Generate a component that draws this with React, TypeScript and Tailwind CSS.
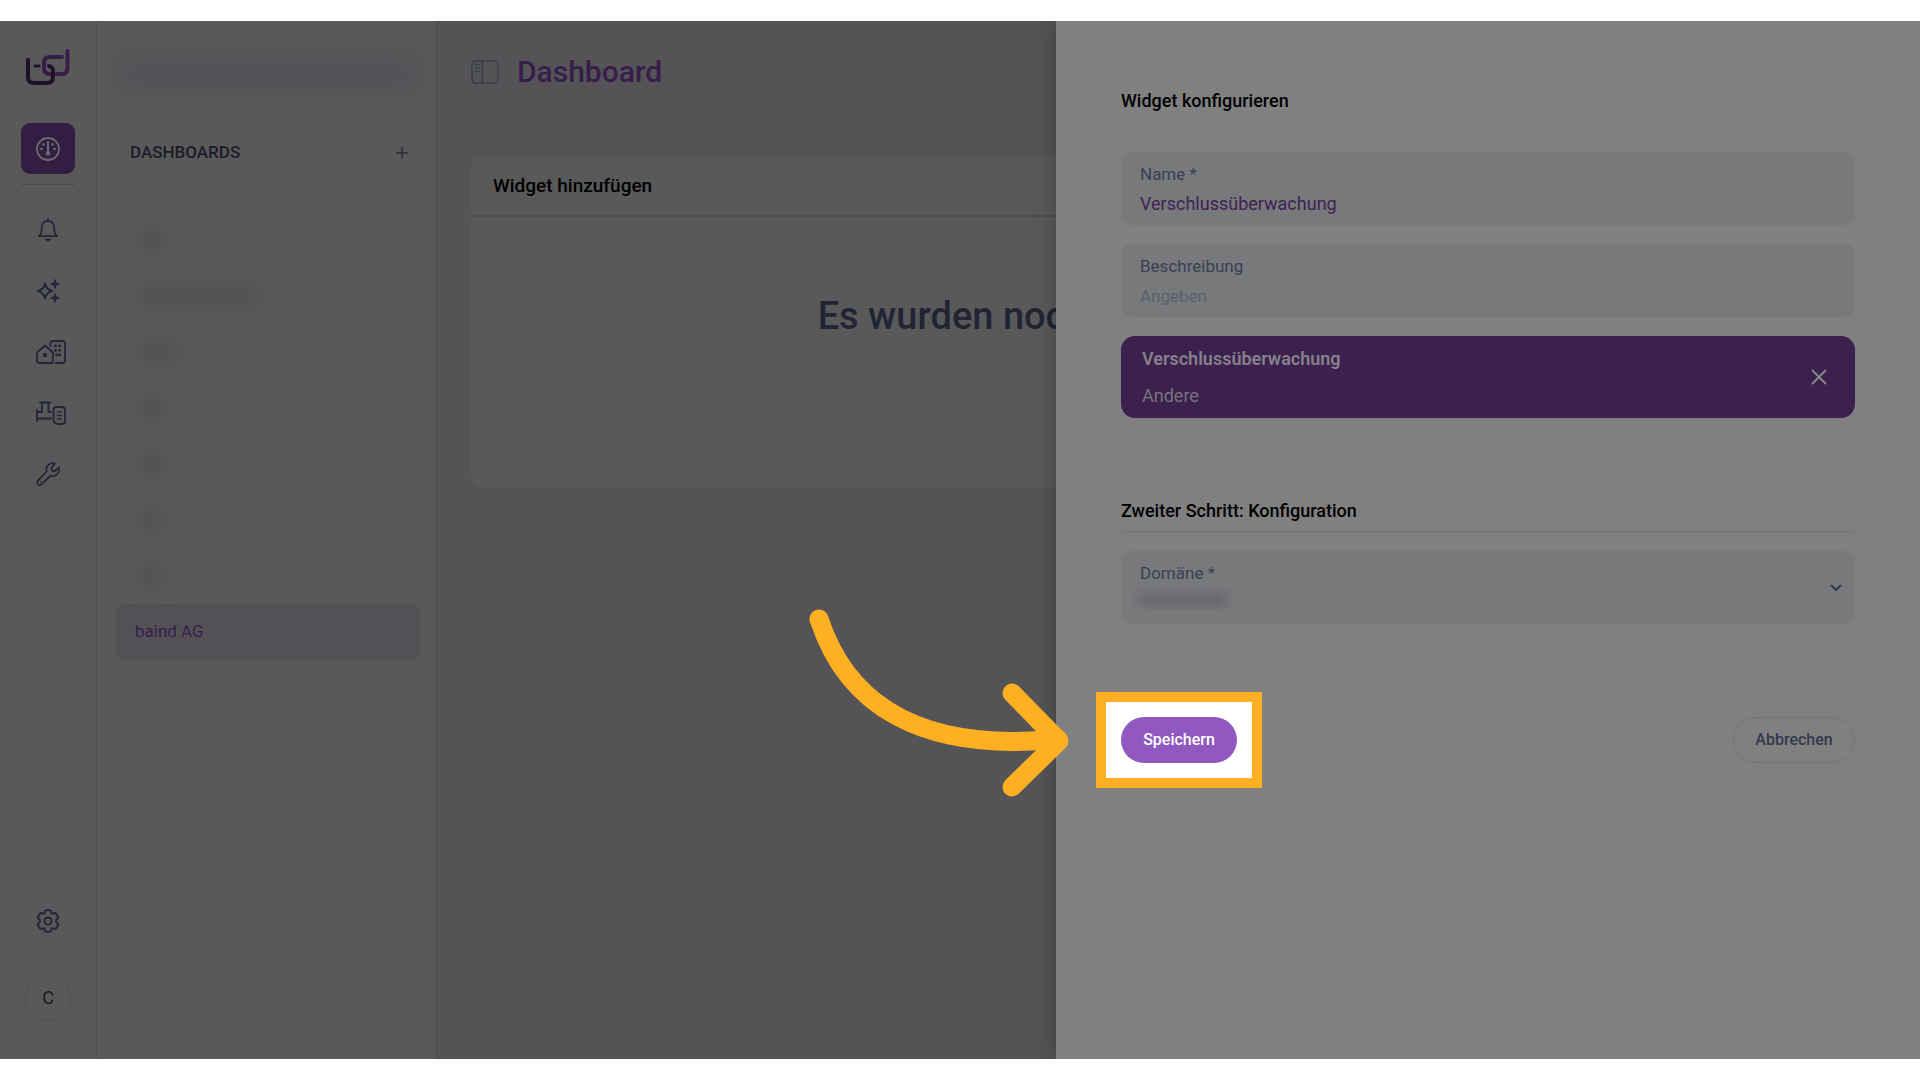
import React from 'react';

const navIcon = 'h-6 w-6 overflow-visible';

const Logo: React.FC = () => (
  <svg viewBox="0 0 44 36" fill="none" strokeWidth="4" strokeLinecap="round" strokeLinejoin="round" className="h-9 w-11">
    <path d="M36 8H24c-4 0-6 2-6 6v5c0 4 2 6 6 6" stroke="#371e48" />
    <path d="M41.500 2v17c0 4-2 6-6 6H31" stroke="#371e48" />
    <path d="M2 11v17c0 4 2 6 6 6h13c4 0 6-2 6-6v-5c0-4-1-5-4-6" stroke="#1e1227" />
    <path d="M9 17h4" stroke="#1e1227" strokeWidth="3" />
  </svg>
);

const GaugeIcon: React.FC = () => (
  <svg viewBox="0 0 24 24" fill="none" stroke="currentColor" className={navIcon}>
    <circle cx="12" cy="12" r="11" strokeWidth="1.800" />
    <path d="M12 5v12" strokeWidth="2" strokeLinecap="round" />
    <circle cx="12" cy="16.500" r="2.200" fill="currentColor" stroke="none" />
    <g fill="currentColor" stroke="none">
      <circle cx="5.500" cy="12" r="1.300" />
      <circle cx="7.500" cy="7.500" r="1.300" />
      <circle cx="16.500" cy="7.500" r="1.300" />
      <circle cx="18.500" cy="12" r="1.300" />
    </g>
  </svg>
);

const BellIcon: React.FC = () => (
  <svg viewBox="0 0 24 24" fill="none" stroke="currentColor" strokeWidth="1.8" strokeLinecap="round" strokeLinejoin="round" className={navIcon}>
    <path d="M12 1v1.500M3 18.200h18c-2-2-2.700-4-2.700-6.500V9.500C18.300 5.500 15.500 3 12 3S5.700 5.500 5.700 9.500v2.200c0 2.500-.7 4.500-2.700 6.500Z" />
    <path d="M9 20.800h6c-.4 1.600-1.500 2.600-3 2.600s-2.600-1-3-2.600Z" fill="currentColor" stroke="none" />
  </svg>
);

const SparklesIcon: React.FC = () => (
  <svg viewBox="0 0 24 24" fill="none" stroke="currentColor" strokeLinejoin="round" className={navIcon}>
    <path d="M9 4.500c.8 4.600 2.600 6.400 7.200 7.500-4.600 1.100-6.400 2.900-7.200 7.500C8.200 14.900 6.400 13.100 1.800 12 6.400 10.900 8.200 9.100 9 4.500Z" strokeWidth="2" />
    <path d="M19 .5c.6 2.900 1.500 3.800 4.500 4.500-3 .7-3.900 1.600-4.500 4.500-.6-2.900-1.500-3.800-4.500-4.500 3-.7 3.900-1.600 4.500-4.500ZM19 14.500c.6 2.900 1.500 3.800 4.500 4.500-3 .7-3.900 1.600-4.500 4.500-.6-2.900-1.500-3.800-4.500-4.500 3-.7 3.900-1.600 4.500-4.500Z" fill="currentColor" />
  </svg>
);

const BuildingsIcon: React.FC = () => (
  <svg viewBox="0 0 30 24" fill="none" stroke="currentColor" strokeWidth="1.8" strokeLinecap="round" strokeLinejoin="round" className="h-6 w-[30px]">
    <path d="M1 12.500 9 5.500l8 7V21c0 1.300-.7 2-2 2H3c-1.300 0-2-.7-2-2Z" />
    <path d="M14.500 6V3c0-1.300.7-2 2-2H27c1.300 0 2 .7 2 2v18c0 1.300-.7 2-2 2h-7.500" />
    <rect x="7" y="13" width="4" height="4" fill="currentColor" stroke="none" rx="1" />
    <path d="M19.500 6h.1M23.500 6h.1M19.500 10.500h.1M23.500 10.500h.1M20.500 15h.1M23.500 15h.1" strokeWidth="2.800" />
  </svg>
);

const DevicesIcon: React.FC = () => (
  <svg viewBox="0 0 30 24" fill="none" stroke="currentColor" strokeWidth="1.8" strokeLinecap="round" strokeLinejoin="round" className="h-6 w-[30px]">
    <path d="M4 1.500h10.500M6 1.500V11H1M12.500 1.500V11H15M1 9v11M1 17.500h14" />
    <path d="M20.500 6H26c2 0 3 1 3 3v11c0 2-1 3-3 3h-3.500c-3.500-.5-5-2-5-4.500V9c0-2 1-3 3-3Z" />
    <path d="M21.500 11h4M21.500 14.500h4M21.500 18h4" strokeWidth="1.400" />
  </svg>
);

const WrenchIcon: React.FC = () => (
  <svg viewBox="0 0 24 24" fill="none" stroke="currentColor" strokeWidth="1.8" strokeLinecap="round" strokeLinejoin="round" className={navIcon}>
    <path d="M18.800 1.300c-3.300-.8-6.600.7-7.900 3.600-.7 1.600-.6 3.200-.3 4.600L1.900 18.600a2.600 2.600 0 0 0 3.700 3.700l8.800-8.400c1.500.3 3.100.3 4.700-.4 3.200-1.400 4.600-5 3.700-8.200l-3.200 3.200c-1.200 1.200-3.200.8-3.900-.6-.5-1-.2-2.200.5-3Z" />
    <path d="M4.500 19.800h.1" />
  </svg>
);

const GearIcon: React.FC = () => (
  <svg viewBox="0 0 24 24" fill="none" stroke="currentColor" strokeWidth="2" strokeLinejoin="round" className={navIcon}>
    <path d="M10 1.200h4c.6 0 1 .4 1.100 1l.3 1.700c.1.500.9 1 1.400.8l1.700-.6c.6-.2 1.200 0 1.500.5l2 3.500c.3.500.2 1.100-.3 1.500l-1.300 1.100c-.4.400-.4 2.200 0 2.600l1.300 1.100c.5.400.6 1 .3 1.500l-2 3.500c-.3.500-.9.700-1.500.5l-1.700-.6c-.5-.2-1.300.3-1.400.8l-.3 1.700c-.1.600-.5 1-1.100 1h-4c-.6 0-1-.4-1.100-1l-.3-1.700c-.1-.5-.9-1-1.400-.8l-1.700.6c-.6.2-1.200 0-1.500-.5l-2-3.500c-.3-.5-.2-1.100.3-1.500l1.300-1.100c.4-.4.4-2.200 0-2.600L2.300 9.600c-.5-.4-.6-1-.3-1.500l2-3.500c.3-.5.900-.7 1.500-.5l1.700.6c.5.2 1.300-.3 1.400-.8l.3-1.700c.1-.6.5-1 1.100-1Z" />
    <circle cx="12" cy="12" r="3.500" />
  </svg>
);

const SidebarToggleIcon: React.FC = () => (
  <svg viewBox="0 0 28 24" fill="none" stroke="currentColor" strokeWidth="1.5" strokeLinecap="round" className="h-6 w-7">
    <rect x="1" y="1" width="26" height="22" rx="3" />
    <path d="M11.500 1v22M4.500 4.500h3.500M4.500 8h3.500M4.500 11.500h3.500" />
  </svg>
);

const navItems = [
  { label: 'Benachrichtigungen', icon: <BellIcon /> },
  { label: 'Assistent', icon: <SparklesIcon /> },
  { label: 'Gebäude', icon: <BuildingsIcon /> },
  { label: 'Geräte', icon: <DevicesIcon /> },
  { label: 'Werkzeuge', icon: <WrenchIcon /> },
];

// widths of the redacted dashboard names
const redactedItems = ['w-8', 'w-[124px]', 'w-11', 'w-8', 'w-8', 'w-7', 'w-7'];

const NavRail: React.FC = () => (
  <nav className="w-[97px] shrink-0 border-r border-[#4d4d57] flex flex-col items-center pt-7 pb-[38px] text-[#23263a]">
    <a href="#" aria-label="Startseite">
      <Logo />
    </a>
    <div className="mt-[38px] pb-2.5 border-b border-[#4c4c4c]">
      <button aria-label="Dashboards" className="block w-[54px] h-[51px] rounded-[9px] bg-[#331d43] text-[#6c6a6e]">
        <span className="flex justify-center">
          <GaugeIcon />
        </span>
      </button>
    </div>
    <div className="mt-8 w-6 flex flex-col gap-9">
      {navItems.map((item) => (
        <button key={item.label} aria-label={item.label} className="h-[25px] w-6 flex items-center">
          <span className="shrink-0">{item.icon}</span>
        </button>
      ))}
    </div>
    <button aria-label="Einstellungen" className="mt-auto">
      <GearIcon />
    </button>
    <button className="mt-[42px] w-[46px] h-[46px] rounded-full border border-[#505051] text-lg text-[#1a1b26]">C</button>
  </nav>
);

const Sidebar: React.FC = () => (
  <aside className="w-[340px] shrink-0 border-r border-[#4b4b54] pl-[19px] pr-4 pt-8">
    <div className="h-11 rounded-lg bg-[#525457] blur-[10px]" />
    <div className="mt-7 h-14 pl-3.5 pr-3 flex items-center justify-between">
      <h2 className="text-[17px] font-medium text-[#1b1c29]">DASHBOARDS</h2>
      <button aria-label="Dashboard hinzufügen" className="text-[#282a3a]">
        <svg viewBox="0 0 12 12" fill="none" stroke="currentColor" strokeWidth="1.3" className="h-3 w-3">
          <path d="M6 0v12M0 6h12" />
        </svg>
      </button>
    </div>
    <ul className="mt-[31px]">
      {redactedItems.map((width, index) => (
        <li key={index} className="h-14 px-[19px] flex items-center">
          <div className={`${width} h-4 rounded bg-[#505154] blur-[8px]`} />
        </li>
      ))}
      <li>
        <a href="#" className="h-14 px-[19px] rounded-[9px] bg-[#545156] flex items-center text-[17px] text-[#371d4b]">
          baind AG
        </a>
      </li>
    </ul>
  </aside>
);

const Dashboard: React.FC = () => (
  <main className="flex-1 min-w-0 bg-[#545456] px-[34px]">
    <div className="h-[102px] flex items-center gap-[18px] text-[#393e47]">
      <button aria-label="Seitenleiste umschalten">
        <SidebarToggleIcon />
      </button>
      <h1 className="text-3xl font-medium text-[#371d4b]">Dashboard</h1>
    </div>
    <section className="mt-[34px] h-[331px] rounded-[10px] bg-[#595959]">
      <div className="h-[60px] px-[22px] border-b-2 border-[#4f4f54] flex items-center">
        <h2 className="text-[19px] font-medium text-black">Widget hinzufügen</h2>
      </div>
      <p className="pt-[77px] pl-2 text-center text-[38px] leading-[44px] font-medium text-[#222436]">
        Es wurden noch keine Widgets hinzugefügt
      </p>
    </section>
  </main>
);

// curved arrow that ends at the highlighted button
const HintArrow: React.FC = () => (
  <svg
    viewBox="0 0 260 190"
    fill="none"
    stroke="#ffb022"
    strokeWidth="19"
    strokeLinecap="round"
    strokeLinejoin="round"
    className="absolute right-full bottom-1/2 mr-[52px] -mb-[57px] w-[260px] h-[190px] pointer-events-none"
  >
    <path d="M10 12C38 98 112 146 249 132" />
    <path d="M203 86l47 48-47 46" />
  </svg>
);

const fieldBox = 'h-[73px] rounded-[10px] bg-[#78797b] px-[19px] pt-2.5 flex flex-col gap-1.5';
const fieldLabel = 'h-6 leading-6 text-[17px] text-[#3b3e57]';
const fieldInput = 'h-6 w-full bg-transparent text-lg text-[#3f2155] placeholder:text-[17px] placeholder:text-[#5a6172] outline-none';

const ConfigDrawer: React.FC = () => (
  <section className="absolute inset-y-0 right-0 w-[45%] bg-[#808080] shadow-[0_0_20px_rgba(0,0,0,0.25)] px-[65px] pt-[66px]">
    <h2 className="text-lg leading-7 font-medium text-black">Widget konfigurieren</h2>
    <form onSubmit={(e) => e.preventDefault()}>
      <div className="mt-[37px] flex flex-col gap-[19px]">
        <div className={fieldBox}>
          <label htmlFor="name" className={fieldLabel}>Name *</label>
          <input id="name" className={fieldInput} defaultValue="Verschlussüberwachung" />
        </div>
        <div className={fieldBox}>
          <label htmlFor="description" className={fieldLabel}>Beschreibung</label>
          <input id="description" className={fieldInput} placeholder="Angeben" />
        </div>
        <div className="h-[82px] rounded-[14px] bg-[#3c214f] pl-[21px] pr-7 flex items-center justify-between">
          <div className="flex flex-col gap-[13px]">
            <h3 className="text-lg leading-6 font-semibold text-[#86808b]">Verschlussüberwachung</h3>
            <p className="text-lg leading-6 text-[#77747c]">Andere</p>
          </div>
          <button type="button" aria-label="Auswahl entfernen" className="text-[#8a8a87]">
            <svg viewBox="0 0 16 16" fill="none" stroke="currentColor" strokeWidth="1.8" strokeLinecap="round" className="h-4 w-4">
              <path d="M1.500 1.500l13 13M14.500 1.500l-13 13" />
            </svg>
          </button>
        </div>
      </div>

      <h2 className="mt-[79px] pb-1.5 border-b border-[#747476] text-lg leading-7 font-medium text-black">
        Zweiter Schritt: Konfiguration
      </h2>
      <div className={`${fieldBox} relative mt-[19px]`}>
        <label htmlFor="domain" className={fieldLabel}>Domäne *</label>
        <select id="domain" className={`${fieldInput} appearance-none`} defaultValue="">
          <option value="" />
        </select>
        <div className="absolute left-2.5 bottom-[15px] h-[23px] w-[104px] overflow-hidden px-2 pt-1.5">
          <div className="h-4 rounded bg-[#6c6873] blur-[5px]" />
        </div>
        <svg viewBox="0 0 12 8" fill="none" stroke="#33364f" strokeWidth="2" strokeLinecap="round" strokeLinejoin="round" className="absolute right-[13px] top-[33px] h-2 w-3 pointer-events-none">
          <path d="M1.500 1.500L6 6l4.500-4.500" />
        </svg>
      </div>

      <div className="mt-[93px] flex items-center justify-between">
        <div className="relative">
          <div className="absolute -inset-[25px] border-10 border-[#ffb022] bg-white" />
          <HintArrow />
          <button type="submit" className="relative block w-[116px] h-[46px] rounded-full bg-[#9058c0] text-base font-medium text-white">
            Speichern
          </button>
        </div>
        <button type="button" className="w-[122px] h-[46px] rounded-full border border-[#757577] text-base font-medium text-[#35384f]">
          Abbrechen
        </button>
      </div>
    </form>
  </section>
);

export default function App() {
  return (
    <div className="min-h-screen bg-white py-[21px] flex font-['Roboto',sans-serif]">
      <div className="relative flex-1 flex bg-[#595959] overflow-hidden">
        <NavRail />
        <Sidebar />
        <Dashboard />
        <ConfigDrawer />
      </div>
    </div>
  );
}
